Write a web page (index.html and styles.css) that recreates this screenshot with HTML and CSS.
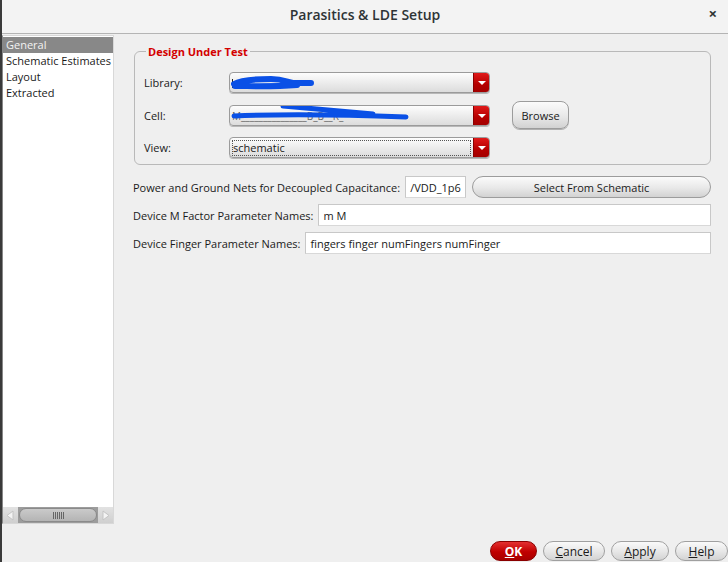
FILE: index.html
```html
<!DOCTYPE html>
<html>
<head>
<meta charset="utf-8">
<link rel="stylesheet" href="styles.css">
</head>
<body>
<div class="window">
  <div class="titlebar">
    <span class="title">Parasitics &amp; LDE Setup</span>
    <span class="close">×</span>
  </div>
  <div class="body">
    <div class="sidebar">
      <div class="list">
        <div class="items">
          <div class="item selected">General</div>
          <div class="item">Schematic Estimates</div>
          <div class="item">Layout</div>
          <div class="item">Extracted</div>
        </div>
        <div class="hscroll">
          <div class="arrow"><svg width="15" height="15" viewBox="0 0 15 15"><path d="M10 3 L4 7.5 L10 12 Z" fill="#f4f4f4" stroke="#c4c4c4"/></svg></div>
          <div class="track"><div class="thumb"><span class="grip"></span></div></div>
          <div class="arrow"><svg width="15" height="15" viewBox="0 0 15 15"><path d="M5 3 L11 7.5 L5 12 Z" fill="#f4f4f4" stroke="#c4c4c4"/></svg></div>
        </div>
      </div>
    </div>
    <div class="main">
      <fieldset class="group">
        <legend>Design Under Test</legend>
        <div class="grow">
          <span class="lbl">Library:</span>
          <div class="combo">
            <span class="ctext"><span class="cursor"></span><svg class="scribble" width="90" height="14" viewBox="0 0 90 14"><path d="M3 8 C10 4 25 3 40 3 C52 3 56 6 62 7 L80 7 M4 10 C20 10 40 11 66 9" stroke="#0a50e6" stroke-width="6" fill="none" stroke-linecap="round"/></svg></span>
            <span class="drop"></span>
          </div>
          <span></span>
          <span class="lbl">Cell:</span>
          <div class="combo">
            <span class="ctext"><span class="faded">M_______________B_B__R_</span><svg class="scribble2" width="185" height="20" viewBox="0 0 185 20"><path d="M55 3 C80 5 110 8 145 11 M6 13 C50 11 100 11 178 14" stroke="#0a50e6" stroke-width="5" fill="none" stroke-linecap="round"/></svg></span>
            <span class="drop"></span>
          </div>
          <button class="btn browse">Browse</button>
          <span class="lbl">View:</span>
          <div class="combo focus">
            <span class="ctext"><span class="dotted">schematic</span></span>
            <span class="drop"></span>
          </div>
          <span></span>
        </div>
      </fieldset>
      <div class="frow first">
        <span class="flbl">Power and Ground Nets for Decoupled Capacitance:</span>
        <div class="field small">/VDD_1p6</div>
        <button class="btn pill">Select From Schematic</button>
      </div>
      <div class="frow">
        <span class="flbl">Device M Factor Parameter Names:</span>
        <div class="field grow1">m M</div>
      </div>
      <div class="frow">
        <span class="flbl">Device Finger Parameter Names:</span>
        <div class="field grow1">fingers finger numFingers numFinger</div>
      </div>
    </div>
  </div>
  <div class="footer">
    <button class="fbtn ok"><u>O</u>K</button>
    <button class="fbtn"><u>C</u>ancel</button>
    <button class="fbtn"><u>A</u>pply</button>
    <button class="fbtn"><u>H</u>elp</button>
  </div>
</div>
</body>
</html>
```

FILE: styles.css
```css
* { box-sizing: border-box; }
html, body { margin: 0; padding: 0; }
body {
  width: 728px;
  height: 562px;
  overflow: hidden;
  background: #efefef;
  font-family: "Open Sans", "Noto Sans", sans-serif;
  font-size: 11px;
  color: #1a1a1a;
}
.window {
  width: 728px;
  height: 562px;
  border-left: 2px solid #3a3a3a;
  background: #efefef;
  display: flex;
  flex-direction: column;
}
.titlebar {
  height: 34px;
  flex: none;
  background: #f3f3f3;
  border-bottom: 1px solid #b4b4b4;
  display: flex;
  align-items: center;
  justify-content: center;
  position: relative;
}
.title {
  font-family: "Open Sans", "Noto Sans", sans-serif;
  font-weight: 600;
  font-size: 14px;
  color: #2e3436;
  margin-top: -5px;
}
.close {
  position: absolute;
  right: 11px;
  top: 3px;
  font-size: 15px;
  font-weight: 700;
  color: #2e3436;
}
.body {
  display: flex;
  height: 492px;
  flex: none;
}
.sidebar {
  width: 112px;
  flex: none;
  padding: 1px 0 0 0;
}
.list {
  height: 489px;
  background: #fff;
  border: 1px solid #d8d8d8;
  border-left: 1px solid #888;
  display: flex;
  flex-direction: column;
}
.items { flex: 1; }
.item {
  height: 16px;
  line-height: 16px;
  padding-left: 3px;
  white-space: nowrap;
  color: #1a1a1a;
}
.item.selected {
  background: #888888;
  color: #f2f2f2;
  margin-top: 1px;
}
.hscroll {
  height: 16px;
  display: flex;
  background: #ececec;
}
.arrow {
  width: 15px;
  height: 16px;
  background: linear-gradient(#e2e2e2, #cfcfcf);
  display: flex;
  align-items: center;
  justify-content: center;
}
.track {
  flex: 1;
  background: #9c9c9c;
  padding: 1px 1px;
}
.thumb {
  height: 14px;
  border-radius: 7px;
  background: linear-gradient(#cacaca, #b4b4b4);
  border: 1px solid #8a8a8a;
  display: flex;
  align-items: center;
  justify-content: center;
}
.grip {
  width: 11px;
  height: 7px;
  background: repeating-linear-gradient(90deg, #666 0 1px, transparent 1px 2px);
}
.main {
  flex: 1;
  padding: 10px 17px 0 19px;
}
.group {
  margin: 0 0 0 1px;
  border: 1px solid #b9b9b9;
  border-radius: 6px;
  padding: 13px 10px 6px 9px;
  min-width: 0;
}
.group legend {
  color: #d40000;
  font-weight: 700;
  font-size: 11px;
  padding: 0 2px;
  margin-left: 2px;
}
.grow {
  display: grid;
  grid-template-columns: 63px 261px auto;
  grid-template-rows: 21px 21px 21px;
  column-gap: 22px;
  row-gap: 11.5px;
  align-items: center;
}
.grow .lbl { grid-column: 1; }
.combo {
  height: 21px;
  border: 1px solid #9b9b9b;
  border-radius: 4px;
  background: linear-gradient(#fdfdfd, #e9e9e9 60%, #dcdcdc);
  display: flex;
  overflow: hidden;
  box-shadow: 0 1px 0 #b8b8b8;
}
.ctext {
  flex: 1;
  position: relative;
  padding: 2px 2px;
  display: flex;
  align-items: center;
  overflow: hidden;
  white-space: nowrap;
}
.cursor { width: 1px; height: 9px; background: #222; margin-right: -1px; margin-top: 2px; }
.scribble { margin-left: -1px; }
.faded { color: #666; position: absolute; left: 2px; top: 3px; font-size: 10px; }
.scribble2 { position: absolute; left: -2px; top: -3px; }
.dotted {
  display: block;
  width: 100%;
  height: 16px;
  line-height: 14px;
  border: 1px dotted #555;
  padding-left: 0;
}
.drop {
  width: 16px;
  background: linear-gradient(#e01a1a, #b50000 60%, #a30000);
  border-left: 1px solid #8a0000;
  position: relative;
}
.drop::after {
  content: "";
  position: absolute;
  left: 4px;
  top: 8px;
  border-left: 4px solid transparent;
  border-right: 4px solid transparent;
  border-top: 4px solid #fff;
}
.btn {
  font-family: inherit;
  font-size: 11px;
  color: #1a1a1a;
  border: 1px solid #9c9c9c;
  background: linear-gradient(#fbfbfb, #e8e8e8 55%, #d2d2d2);
  cursor: default;
}
.browse {
  width: 57px;
  height: 28px;
  border-radius: 8px;
  padding: 0;
  box-shadow: 0 1px 0 #b0b0b0;
}
.frow {
  display: flex;
  align-items: center;
  margin-top: 6px;
  height: 22px;
}
.frow.first { margin-top: 11px; }
.flbl { white-space: nowrap; margin-right: 5px; }
.field {
  height: 22px;
  border: 1px solid #c8c8c8;
  border-bottom-color: #d8d8d8;
  background: #fff;
  padding: 0 4px;
  display: flex;
  align-items: center;
  white-space: nowrap;
  overflow: hidden;
}
.small { width: 61px; padding-left: 4px; }
.grow1 { flex: 1; }
.pill {
  flex: 1;
  height: 22px;
  margin-left: 6px;
  border-radius: 11px;
  padding: 0;
}
.footer {
  flex: 1;
  display: flex;
  justify-content: flex-end;
  align-items: flex-end;
  gap: 6px;
  padding: 0 0 1px 0;
}
.fbtn {
  height: 20px;
  width: 58px;
  border-radius: 10px;
  border: 1px solid #a0a0a0;
  background: linear-gradient(#fafafa, #e6e6e6 55%, #d3d3d3);
  font-family: inherit;
  font-size: 12px;
  color: #1a1a1a;
  padding: 0;
}
.fbtn:nth-child(2) { width: 62px; }
.fbtn:nth-child(4) { width: 53px; }
.fbtn.ok {
  width: 47px;
  background: linear-gradient(#e43030, #c00000 55%, #a80000);
  border-color: #8a0000;
  color: #fff;
  font-weight: 700;
}
```
